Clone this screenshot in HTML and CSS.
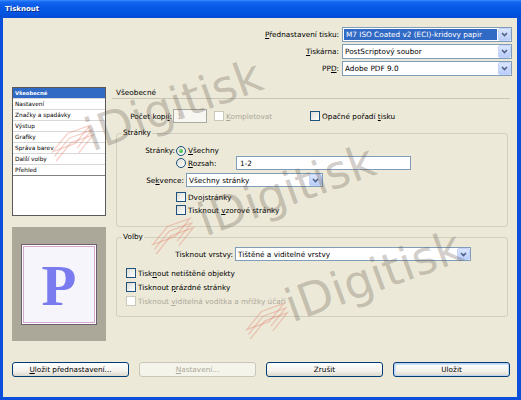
FILE: index.html
```html
<!DOCTYPE html>
<html lang="cs">
<head>
<meta charset="utf-8">
<title>Tisknout</title>
<link rel="stylesheet" href="styles.css">
</head>
<body>
<div class="window">
  <div class="titlebar"><span class="title">Tisknout</span></div>
  <div class="client">
    <div class="presets">
      <div class="prow">
        <span class="plabel"><u>P</u>řednastavení tisku:</span>
        <div class="select wide"><span class="val hl">M7 ISO Coated v2 (ECI)-kridovy papir</span><span class="drop"><svg width="7" height="5" viewBox="0 0 7 5"><path d="M1 1 L3.5 3.6 L6 1" /></svg></span></div>
      </div>
      <div class="prow">
        <span class="plabel"><u>T</u>iskárna:</span>
        <div class="select wide"><span class="val">PostScriptový soubor</span><span class="drop"><svg width="7" height="5" viewBox="0 0 7 5"><path d="M1 1 L3.5 3.6 L6 1" /></svg></span></div>
      </div>
      <div class="prow">
        <span class="plabel">PP<u>D</u>:</span>
        <div class="select wide"><span class="val">Adobe PDF 9.0</span><span class="drop"><svg width="7" height="5" viewBox="0 0 7 5"><path d="M1 1 L3.5 3.6 L6 1" /></svg></span></div>
      </div>
    </div>

    <div class="main">
      <div class="leftcol">
        <ul class="navlist">
          <li class="active">Všeobecné</li>
          <li>Nastavení</li>
          <li>Značky a spadávky</li>
          <li>Výstup</li>
          <li>Grafiky</li>
          <li>Správa barev</li>
          <li>Další volby</li>
          <li class="last">Přehled</li>
        </ul>
        <div class="preview">
          <div class="page"><span class="pglyph">P</span></div>
        </div>
      </div>

      <div class="panel">
        <div class="phead">Všeobecné</div>
        <div class="copies">
          <span class="lbl-copies">Počet kopi<u>í</u>:</span>
          <div class="input copies-input">1</div>
          <label class="check disabled komplet"><span class="cb"></span><span><u>K</u>ompletovat</span></label>
          <label class="check"><span class="cb"></span><span>Opačné pořadí <u>t</u>isku</span></label>
        </div>

        <fieldset class="group pages">
          <legend>Stránky</legend>
          <div class="r r1">
            <span class="lbl-pages">Stránky:</span>
            <span class="radio on"></span><span class="rtext"><u>V</u>šechny</span>
          </div>
          <div class="r r2">
            <span class="spacer-r"></span>
            <span class="radio"></span><span class="rtext range-lbl"><u>R</u>ozsah:</span>
            <div class="input range-input">1-2</div>
          </div>
          <div class="r r3">
            <span class="lbl-seq">Se<u>k</u>vence:</span>
            <div class="select seq"><span class="val">Všechny stránky</span><span class="drop"><svg width="7" height="5" viewBox="0 0 7 5"><path d="M1 1 L3.5 3.6 L6 1" /></svg></span></div>
          </div>
          <label class="check indent cb-a"><span class="cb"></span><span>Dvo<u>j</u>stránky</span></label>
          <label class="check indent cb-b"><span class="cb"></span><span>Tisknout <u>v</u>zorové stránky</span></label>
        </fieldset>

        <fieldset class="group opts">
          <legend>Volby</legend>
          <div class="r o1">
            <span class="lbl-layers">Tisknout vrstvy:</span>
            <div class="select layers"><span class="val">Tištěné a viditelné vrstvy</span><span class="drop"><svg width="7" height="5" viewBox="0 0 7 5"><path d="M1 1 L3.5 3.6 L6 1" /></svg></span></div>
          </div>
          <label class="check oindent oc1"><span class="cb"></span><span>Tisk<u>n</u>out netištěné objekty</span></label>
          <label class="check oindent oc2"><span class="cb"></span><span>Tisknout <u>p</u>rázdné stránky</span></label>
          <label class="check oindent oc3 disabled"><span class="cb"></span><span>Tisknout <u>v</u>iditelná vodítka a mřížky účaří</span></label>
        </fieldset>
      </div>
    </div>

    <div class="buttons">
      <div class="btn"><span><u>U</u>ložit přednastavení...</span></div>
      <div class="btn disabled"><span><u>N</u>astavení...</span></div>
      <div class="btn">Zrušit</div>
      <div class="btn default">Uložit</div>
    </div>
  </div>

  <svg class="wm-logo logo1" width="50" height="36" viewBox="0 0 50 36"><g><path d="M2 22 L22 10 L46 10 L26 22 Z"/><path d="M2 27 L22 15 L46 15 L26 27"/><path d="M2 32 L22 20 L46 20 L26 32"/></g></svg>
  <svg class="wm-logo logo2" width="50" height="36" viewBox="0 0 50 36"><g><path d="M2 22 L22 10 L46 10 L26 22 Z"/><path d="M2 27 L22 15 L46 15 L26 27"/><path d="M2 32 L22 20 L46 20 L26 32"/></g></svg>
  <svg class="wm-logo logo3" width="50" height="36" viewBox="0 0 50 36"><g><path d="M2 22 L22 10 L46 10 L26 22 Z"/><path d="M2 27 L22 15 L46 15 L26 27"/><path d="M2 32 L22 20 L46 20 L26 32"/></g></svg>
  <div class="wm wm1">iDigitisk</div>
  <div class="wm wm2">iDigitisk</div>
  <div class="wm wm3">iDigitisk</div>
</div>
</body>
</html>
```

FILE: styles.css
```css
html, body {
  margin: 0;
  padding: 0;
  background: #ffffff;
}

.window {
  position: relative;
  width: 521px;
  height: 400px;
  overflow: hidden;
  display: flex;
  flex-direction: column;
  background: #0a50dc;
  font-family: "DejaVu Sans", sans-serif;
  font-size: 7.3px;
  color: #000;
}

.titlebar {
  flex: none;
  height: 18px;
  display: flex;
  align-items: center;
  padding-left: 5px;
  background: linear-gradient(#3a8cff 0, #1467f0 2px, #0a5ae6 6px, #0055e3 70%, #004bd6 100%);
}

.title {
  color: #fff;
  font-weight: bold;
  font-size: 7px;
  text-shadow: 1px 1px 0 #0b2a8a;
}

.client {
  flex: 1;
  margin: 0 4px 3px 3px;
  background: #ece9d8;
  display: flex;
  flex-direction: column;
  padding: 9px 5px 20px 9px;
  box-sizing: border-box;
}

u { text-decoration: underline; text-underline-offset: 1px; }

/* top preset rows */
.presets {
  display: flex;
  flex-direction: column;
  align-items: flex-end;
  gap: 2px;
}
.prow {
  display: flex;
  align-items: center;
  gap: 3px;
}

.select {
  box-sizing: border-box;
  display: flex;
  align-items: center;
  height: 15px;
  border: 1px solid #7f9db9;
  background: #fff;
}
.select.wide { width: 170px; }
.select .val {
  flex: 1;
  align-self: stretch;
  display: flex;
  align-items: center;
  padding-left: 2px;
  white-space: nowrap;
  overflow: hidden;
}
.select .val.hl {
  background: #316ac5;
  color: #fff;
  margin: 1px 1px 1px 1px;
}
.drop {
  box-sizing: border-box;
  width: 13px;
  align-self: stretch;
  margin: 0;
  display: flex;
  align-items: center;
  justify-content: center;
  background: linear-gradient(#dbe6fe, #b9cdf8);
  border: 1px solid #c3d3fd;
  border-radius: 2px;
}
.drop svg path {
  fill: none;
  stroke: #4d6185;
  stroke-width: 1.5;
}

/* main area */
.main {
  display: flex;
  gap: 6px;
  margin-top: 11px;
  height: 254px;
}
.leftcol {
  width: 94px;
  display: flex;
  flex-direction: column;
}
.navlist {
  list-style: none;
  margin: 0;
  padding: 0;
  height: 129px;
  box-sizing: border-box;
  border: 1px solid #5a5a5a;
  background: #fff;
}
.navlist li {
  height: 10px;
  line-height: 10px;
  border-bottom: 1px solid #d8d8d8;
  padding-left: 2px;
  font-size: 5.8px;
  white-space: nowrap;
}
.navlist li.active {
  background: #316ac5;
  color: #fff;
  font-weight: bold;
  font-size: 5.3px;
}
.navlist li.last { border-bottom-color: #808080; }

.preview {
  margin-top: 11px;
  height: 114px;
  background: #aca899;
  display: flex;
  align-items: center;
  justify-content: center;
}
.page {
  box-sizing: border-box;
  width: 76px;
  height: 81px;
  background: #f6f5fb;
  border: 1px solid #6c6070;
  box-shadow: inset 0 0 0 1px #fff, inset 0 0 0 2px #d6a8d0;
  display: flex;
  align-items: center;
  justify-content: center;
}
.pglyph {
  font-family: "Liberation Serif", serif;
  font-weight: bold;
  font-size: 57px;
  line-height: 1;
  color: #7b7bf0;
  margin-top: 2px;
}

.panel {
  width: 398px;
  display: flex;
  flex-direction: column;
}
.phead {
  height: 11px;
  line-height: 11px;
  padding-left: 4px;
  border-bottom: 1px solid #c9c6b6;
}

.copies {
  display: flex;
  align-items: center;
  height: 14px;
  margin-top: 10px;
}
.lbl-copies {
  width: 60px;
  text-align: right;
  margin-right: 1px;
}
.input {
  box-sizing: border-box;
  height: 14px;
  border: 1px solid #7f9db9;
  background: #fff;
  display: flex;
  align-items: center;
  padding-left: 3px;
}
.copies-input {
  width: 34px;
  border-color: #a9a9a0;
  background: #f7f6f0;
  color: #b8b4a6;
}
.komplet {
  margin-left: 7px;
  width: 96px;
}

.check {
  display: flex;
  align-items: center;
  gap: 2px;
  white-space: nowrap;
}
.cb {
  box-sizing: border-box;
  width: 10px;
  height: 10px;
  border: 1px solid #1c5180;
  background: linear-gradient(135deg, #dcdcd6, #ffffff);
  flex: none;
}
.check.disabled { color: #aca899; }
.check.disabled .cb {
  border-color: #cac8bb;
  background: #fff;
}

.radio {
  box-sizing: border-box;
  width: 10px;
  height: 10px;
  border: 1px solid #1c5180;
  border-radius: 50%;
  background: linear-gradient(135deg, #dcdcd6, #ffffff);
  display: flex;
  align-items: center;
  justify-content: center;
  flex: none;
}
.radio.on::after {
  content: "";
  width: 4px;
  height: 4px;
  border-radius: 50%;
  background: radial-gradient(circle at 35% 35%, #7ddf7d, #21a121);
}
.rtext { margin-left: 2px; }

/* group boxes */
.group {
  margin: 0 0 0 4px;
  width: 392px;
  box-sizing: border-box;
  border: 1px solid #d0d0bf;
  border-radius: 3px;
  padding: 0;
  min-width: 0;
}
.group legend {
  margin-left: 5px;
  padding: 0 1px;
  line-height: 10px;
  height: 10px;
}
.pages {
  margin-top: 5px;
  padding: 7px 0 10px 0;
}
.opts {
  margin-top: 5px;
  padding: 5px 0 9px 0;
}
.r {
  display: flex;
  align-items: center;
}
.r1 { height: 11px; }
.lbl-pages {
  width: 58px;
  text-align: right;
  margin-right: 1px;
}
.r2 { height: 14px; }
.spacer-r { width: 59px; }
.range-lbl { width: 48px; }
.range-input { width: 175px; }
.r3 { height: 14px; margin-top: 3px; }
.lbl-seq {
  width: 67px;
  text-align: right;
  margin-right: 2px;
}
.select.seq { width: 137px; height: 14px; }
.indent { padding-left: 59px; height: 12px; }
.cb-a { margin-top: 4px; }
.cb-b { margin-top: 1px; }

.o1 { height: 14px; }
.lbl-layers {
  width: 116px;
  text-align: right;
  margin-right: 2px;
}
.select.layers { width: 236px; height: 14px; }
.oindent { padding-left: 9px; height: 12px; }
.oc1 { margin-top: 6px; }
.oc2, .oc3 { margin-top: 2px; }

/* buttons */
.buttons {
  margin-top: auto;
  display: flex;
  gap: 10px;
}
.btn {
  box-sizing: border-box;
  width: 117px;
  height: 15px;
  border: 1px solid #003c74;
  border-radius: 3px;
  background: linear-gradient(#ffffff, #f3f2ec 60%, #dcd8cc);
  display: flex;
  align-items: center;
  justify-content: center;
}
.btn.disabled {
  border-color: #c9c7ba;
  background: #f5f4ea;
  color: #aca899;
}
.btn.default {
  box-shadow: inset 0 0 0 1px #bcd4f6, inset 1px 1px 0 1px #cee0fa;
}

/* watermarks */
.wm {
  position: absolute;
  font-family: "DejaVu Sans", sans-serif;
  font-size: 46px;
  line-height: 1;
  white-space: nowrap;
  color: rgba(100, 85, 75, 0.3);
  transform: rotate(-20deg);
  transform-origin: 0 0;
  pointer-events: none;
}
.wm1 { left: 79px; top: 115px; }
.wm2 { left: 192px; top: 200px; }
.wm3 { left: 279px; top: 286px; }

.wm-logo {
  position: absolute;
  transform: rotate(-20deg);
  pointer-events: none;
}
.wm-logo path {
  fill: none;
  stroke: rgba(228, 120, 100, 0.35);
  stroke-width: 1.3;
}
.logo1 { left: 48px; top: 122px; }
.logo2 { left: 148px; top: 215px; }
.logo3 { left: 242px; top: 300px; }
```
